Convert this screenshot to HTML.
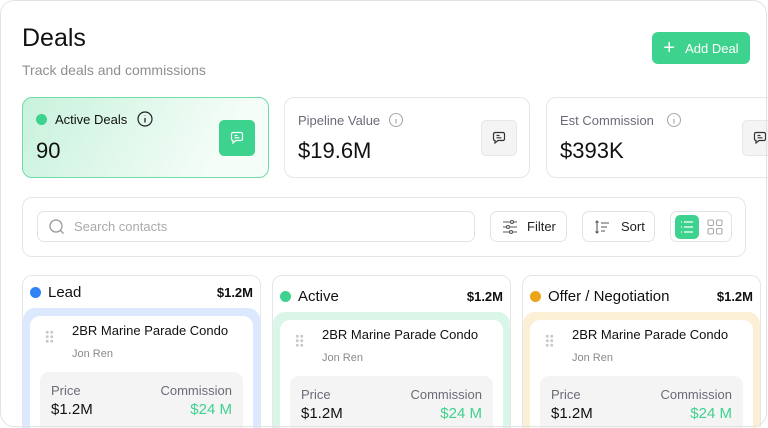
<!DOCTYPE html>
<html><head><meta charset="utf-8"><style>
*{box-sizing:border-box;margin:0;padding:0}
html,body{width:768px;height:428px;overflow:hidden}
body{background:#fff;font-family:"Liberation Sans",sans-serif;color:#111;position:relative}
.frame{position:absolute;left:0;top:0;width:768px;height:428px;border-radius:14px;overflow:hidden;background:#fff}
.bord{position:absolute;left:0;top:0;width:767px;height:427px;border:1.5px solid #e2e2e2;border-radius:14px;pointer-events:none}
.a{position:absolute}
.card{position:absolute;top:97px;height:81px;border:1px solid #e6e6e6;border-radius:10px;background:#fff}
.lbl{position:absolute;left:13px;top:13px;font-size:13px;color:#6b6b78;display:flex;align-items:center;gap:8px}
.val{position:absolute;left:13px;top:40px;font-size:22px;color:#111}
.ib{position:absolute;top:22px;width:36px;height:36px;border-radius:5px;background:#f4f4f4;border:1px solid #e6e6e6;display:flex;align-items:center;justify-content:center}
.btn{position:absolute;top:211px;height:31px;border:1px solid #e3e3e3;border-radius:7px;display:flex;align-items:center;font-size:13px;color:#222}
.col{position:absolute;top:275px;width:239px;height:170px;border:1px solid #e6e6e6;border-radius:10px;background:#fff;overflow:hidden}
.ch{position:absolute;left:7px;right:7px;display:flex;align-items:center;font-size:15px}
.ch .d{width:11px;height:11px;border-radius:50%;margin-right:7px}
.ch .m{margin-left:auto;font-size:13px;font-weight:bold}
.band{position:absolute;left:0;right:0;bottom:-10px;border-radius:12px}
.wc{position:absolute;left:7px;right:7px;bottom:-10px;background:#fff;border-radius:10px}
.t{position:absolute;left:42px;top:7px;font-size:13px;color:#111}
.s{position:absolute;left:42px;top:32px;font-size:11px;color:#8a8a8a}
.g{position:absolute;left:15px;top:14px;width:9px;height:13px;background:radial-gradient(circle,#c8c8c8 1.4px,transparent 1.6px) 0 0/4.5px 4.5px}
.pb{position:absolute;left:10px;right:10px;top:56px;height:80px;background:#f4f4f4;border-radius:9px}
.pb .l1{position:absolute;left:11px;top:11px;font-size:13px;color:#6b6b78}
.pb .r1{position:absolute;right:11px;top:11px;font-size:13px;color:#6b6b78}
.pb .l2{position:absolute;left:11px;top:29px;font-size:15px;color:#111}
.pb .r2{position:absolute;right:11px;top:29px;font-size:15px;color:#3dd28d}
</style></head><body><div class="frame">
<div class="a" style="left:22px;top:24px;font-size:25px;color:#111">Deals</div>
<div class="a" style="left:22px;top:62px;font-size:14px;color:#8f8f8f">Track deals and commissions</div>
<div class="a" style="left:652px;top:32px;width:98px;height:32px;background:#3dd28d;border-radius:6px;color:#fff;font-size:13px;display:flex;align-items:center;justify-content:center;gap:10px"><span style="font-size:20px;font-weight:300;line-height:1">+</span>Add Deal</div>

<div class="card" style="left:22px;width:247px;background:linear-gradient(120deg,#c8f2dc,#f5fdf8 80%);border-color:#6fdca6">
<div class="lbl" style="color:#111"><span style="width:11px;height:11px;border-radius:50%;background:#3dd28d"></span>Active Deals <svg width="16" height="16" viewBox="0 0 16 16" style="margin-left:2px"><circle cx="8" cy="8" r="7" fill="none" stroke="#222" stroke-width="1.2"/><path d="M8 7v4.5M8 4.6v.4" stroke="#222" stroke-width="1.3"/></svg></div>
<div class="val">90</div>
<div class="ib" style="left:196px;background:#3dd28d;border-color:#3dd28d"><svg width="16" height="16" viewBox="0 0 16 16" fill="none" stroke="#fff" stroke-width="1.2"><path d="M4 2.5h8a1.5 1.5 0 0 1 1.5 1.5v5a1.5 1.5 0 0 1-1.5 1.5H7l-3 2.5V10.5a1.5 1.5 0 0 1-1.5-1.5V4A1.5 1.5 0 0 1 4 2.5z"/><path d="M5.5 5.5h3M5.5 7.8h5"/></svg></div></div>

<div class="card" style="left:284px;width:246px">
<div class="lbl" style="top:14px">Pipeline Value <svg width="16" height="16" viewBox="0 0 16 16"><circle cx="8" cy="8" r="6.5" fill="none" stroke="#aaa" stroke-width="1.1"/><path d="M8 7v4.5M8 4.6v.4" stroke="#aaa" stroke-width="1.2"/></svg></div>
<div class="val">$19.6M</div>
<div class="ib" style="left:196px"><svg width="16" height="16" viewBox="0 0 16 16" fill="none" stroke="#333" stroke-width="1.2"><path d="M4 2.5h8a1.5 1.5 0 0 1 1.5 1.5v5a1.5 1.5 0 0 1-1.5 1.5H7l-3 2.5V10.5a1.5 1.5 0 0 1-1.5-1.5V4A1.5 1.5 0 0 1 4 2.5z"/><path d="M5.5 5.5h3M5.5 7.8h5"/></svg></div></div>

<div class="card" style="left:546px;width:246px">
<div class="lbl" style="top:14px">Est Commission <svg width="16" height="16" viewBox="0 0 16 16" style="margin-left:4px"><circle cx="8" cy="8" r="6.5" fill="none" stroke="#aaa" stroke-width="1.1"/><path d="M8 7v4.5M8 4.6v.4" stroke="#aaa" stroke-width="1.2"/></svg></div>
<div class="val">$393K</div>
<div class="ib" style="left:195px"><svg width="16" height="16" viewBox="0 0 16 16" fill="none" stroke="#333" stroke-width="1.2"><path d="M4 2.5h8a1.5 1.5 0 0 1 1.5 1.5v5a1.5 1.5 0 0 1-1.5 1.5H7l-3 2.5V10.5a1.5 1.5 0 0 1-1.5-1.5V4A1.5 1.5 0 0 1 4 2.5z"/><path d="M5.5 5.5h3M5.5 7.8h5"/></svg></div></div>

<div class="a" style="left:22px;top:197px;width:724px;height:60px;border:1px solid #e6e6e6;border-radius:10px"></div>
<div class="btn" style="left:37px;width:438px;padding-left:10px;color:#aaa"><svg width="18" height="18" viewBox="0 0 18 18" fill="none" stroke="#999" stroke-width="1.3"><circle cx="8" cy="8" r="6"/><path d="M12.5 12.5l3 3"/></svg><span style="margin-left:8px">Search contacts</span></div>
<div class="btn" style="left:490px;width:77px;padding-left:11px"><svg width="16" height="16" viewBox="0 0 16 16" fill="none" stroke="#555" stroke-width="1.1"><path d="M1 3h14M1 8h14M1 13h14"/><circle cx="10" cy="3" r="1.5" fill="#fff"/><circle cx="6" cy="8" r="1.5" fill="#fff"/><circle cx="9" cy="13" r="1.5" fill="#fff"/></svg><span style="margin-left:9px">Filter</span></div>
<div class="btn" style="left:582px;width:73px;padding-left:11px"><svg width="16" height="16" viewBox="0 0 16 16" fill="none" stroke="#555" stroke-width="1.1"><path d="M3 2v12M1.5 3.5L3 2l1.5 1.5M1.5 12.5L3 14l1.5-1.5M7 4h8M7 8h6M7 12h4"/></svg><span style="margin-left:11px">Sort</span></div>
<div class="btn" style="left:670px;width:62px;padding:0 4px;justify-content:space-between"><div style="width:24px;height:24px;background:#3dd28d;border-radius:5px;display:flex;align-items:center;justify-content:center"><svg width="14" height="12" viewBox="0 0 14 12" fill="none" stroke="#fff" stroke-width="1.2"><path d="M1 1h1M1 6h1M1 11h1M4 1h9M4 6h9M4 11h9"/></svg></div><svg width="24" height="24" viewBox="0 0 24 24" fill="none" stroke="#aaa" stroke-width="1.1"><rect x="5" y="5" width="5.5" height="5.5" rx="1.5"/><rect x="13.5" y="5" width="5.5" height="5.5" rx="1.5"/><rect x="5" y="13.5" width="5.5" height="5.5" rx="1.5"/><rect x="13.5" y="13.5" width="5.5" height="5.5" rx="1.5"/></svg></div>

<div class="col" style="left:22px"><div class="ch" style="top:8px"><span class="d" style="background:#3182f6"></span>Lead<span class="m">$1.2M</span></div>
<div class="band" style="top:32px;background:#dbe8fd"></div>
<div class="wc" style="top:40px"><div class="g"></div><div class="t">2BR Marine Parade Condo</div><div class="s">Jon Ren</div><div class="pb"><span class="l1">Price</span><span class="r1">Commission</span><span class="l2">$1.2M</span><span class="r2">$24 M</span></div></div></div>

<div class="col" style="left:272px"><div class="ch" style="top:12px"><span class="d" style="background:#3dd28d"></span>Active<span class="m">$1.2M</span></div>
<div class="band" style="top:36px;background:#d9f6e8"></div>
<div class="wc" style="top:44px"><div class="g"></div><div class="t">2BR Marine Parade Condo</div><div class="s">Jon Ren</div><div class="pb"><span class="l1">Price</span><span class="r1">Commission</span><span class="l2">$1.2M</span><span class="r2">$24 M</span></div></div></div>

<div class="col" style="left:522px"><div class="ch" style="top:12px"><span class="d" style="background:#eaa416"></span>Offer / Negotiation<span class="m">$1.2M</span></div>
<div class="band" style="top:36px;background:#fbefd6"></div>
<div class="wc" style="top:44px"><div class="g"></div><div class="t">2BR Marine Parade Condo</div><div class="s">Jon Ren</div><div class="pb"><span class="l1">Price</span><span class="r1">Commission</span><span class="l2">$1.2M</span><span class="r2">$24 M</span></div></div></div>
<div class="bord"></div>
</div></body></html>
